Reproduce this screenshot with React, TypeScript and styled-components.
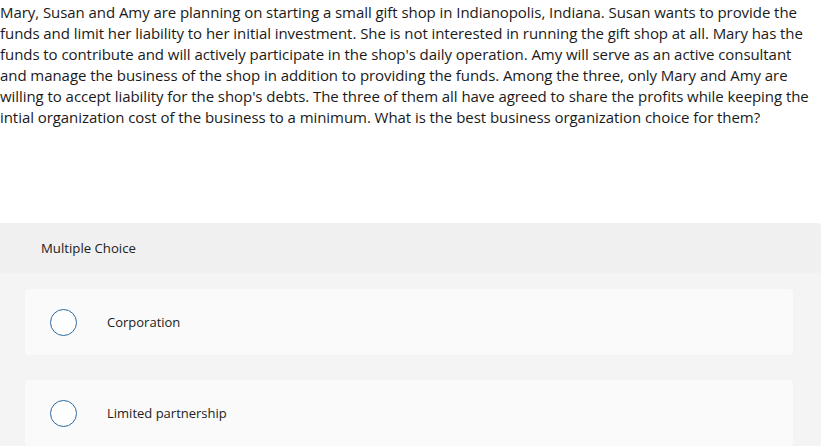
import React from 'react';
import styled, { createGlobalStyle } from 'styled-components';

const GlobalStyle = createGlobalStyle`
  html, body {
    margin: 0;
    padding: 0;
    background: #ffffff;
  }
  body {
    font-family: 'Open Sans', 'Liberation Sans', sans-serif;
    color: #1f1f1f;
  }
`;

const Page = styled.div`
  width: 839px;
  height: 448px;
  overflow: hidden;
`;

const Prompt = styled.div`
  font-size: 15px;
  line-height: 21px;
  padding-top: 2px;
  color: #1a1a1a;
  letter-spacing: -0.06px;
`;

const PromptLine = styled.div`
  white-space: nowrap;
`;

const Panel = styled.section`
  width: 821px;
  margin-top: 95px;
  border-radius: 0 4px 0 0;
  overflow: hidden;
`;

const PanelHeader = styled.div`
  height: 50px;
  display: flex;
  align-items: center;
  padding-left: 41px;
  background: #f0f0f0;
  font-size: 13.2px;
  color: #222;
`;

const PanelBody = styled.div`
  background: #f4f4f4;
  padding: 16px 28px 0 25px;
  display: flex;
  flex-direction: column;
  gap: 25px;
`;

const Option = styled.label`
  height: 66px;
  display: flex;
  align-items: center;
  background: #fafafa;
  border-radius: 4px;
  padding-left: 25px;
  font-size: 13px;
  color: #222;
`;

const Radio = styled.span`
  width: 25px;
  height: 25px;
  border-radius: 50%;
  border: 1.5px solid #2b68a0;
  background: #fff;
  flex: none;
  margin-right: 30px;
`;

const lines = [
  'Mary, Susan and Amy are planning on starting a small gift shop in Indianopolis, Indiana. Susan wants to provide the',
  'funds and limit her liability to her initial investment. She is not interested in running the gift shop at all. Mary has the',
  "funds to contribute and will actively participate in the shop's daily operation. Amy will serve as an active consultant",
  'and manage the business of the shop in addition to providing the funds. Among the three, only Mary and Amy are',
  "willing to accept liability for the shop's debts. The three of them all have agreed to share the profits while keeping the",
  'intial organization cost of the business to a minimum. What is the best business organization choice for them?',
];

const choices = ['Corporation', 'Limited partnership'];

export default function App() {
  return (
    <Page>
      <GlobalStyle />
      <Prompt>
        {lines.map((l) => (
          <PromptLine key={l}>{l}</PromptLine>
        ))}
      </Prompt>
      <Panel>
        <PanelHeader>Multiple Choice</PanelHeader>
        <PanelBody>
          {choices.map((c) => (
            <Option key={c}>
              <Radio />
              {c}
            </Option>
          ))}
        </PanelBody>
      </Panel>
    </Page>
  );
}
